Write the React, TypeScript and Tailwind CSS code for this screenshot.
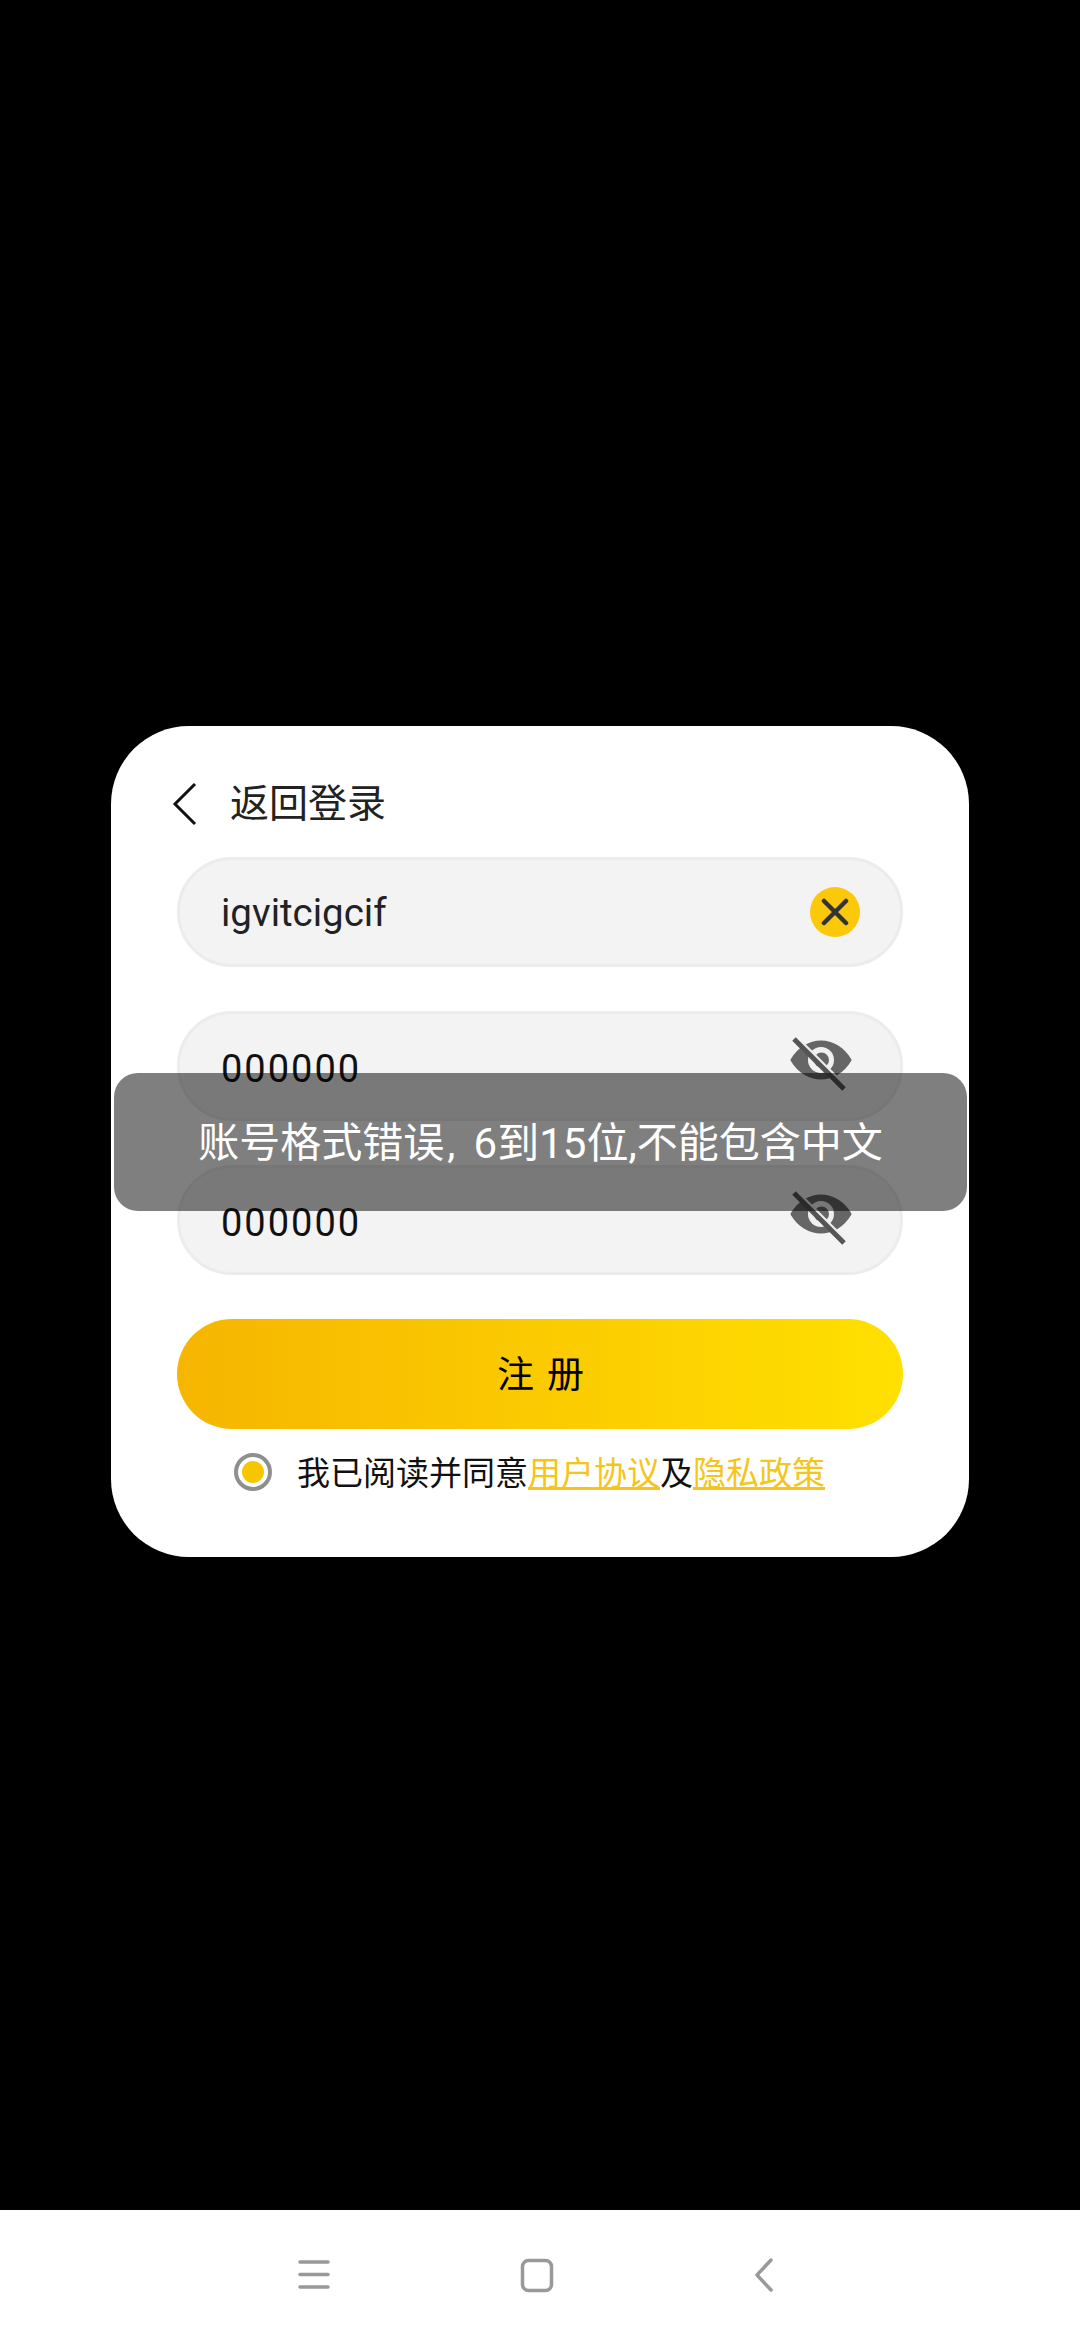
const font = 'font-["Roboto","Noto_Sans_CJK_SC",sans-serif]';

function EyeOff() {
    return (
        <svg width="70" height="60" viewBox="0 0 70 60" className="shrink-0">
            <path d="M7 24 C14 12 25 6 36 6 C47 6 58 12 65 24 C58 36 47 42 36 42 C25 42 14 36 7 24 Z" fill="#666666" stroke="#666666" strokeWidth="3" strokeLinejoin="round" />
            <circle cx="36" cy="24" r="13" fill="#f0f0f0" />
            <circle cx="36.5" cy="24" r="7.5" fill="#666666" />
            <path d="M15 5 L59 49" stroke="#eeeeee" strokeWidth="3.5" />
            <path d="M9 3 L59 53" stroke="#555555" strokeWidth="5" />
        </svg>
    );
}

function Field({ children, icon }: { children: React.ReactNode; icon: React.ReactNode }) {
    return (
        <div className="flex h-[110px] items-center justify-between rounded-full border-[3px] border-[#ececec] bg-[#f3f3f3] pl-[41px] pr-[45px]">
            {children}
            {icon}
        </div>
    );
}

export default function App() {
    return (
        <div className={`flex h-[2340px] w-[1080px] flex-col bg-black ${font}`}>
            <div className="flex h-[2210px] justify-center pt-[726px]">
                <div className="relative h-[831px] w-[858px] rounded-[78px] bg-white px-[66px] pt-[48px]">
                    <div className="mb-[23px] flex h-[60px] items-center">
                        <svg width="26" height="44" viewBox="0 0 26 44" className="-ml-[5px]">
                            <path d="M23 2 L3 22 L23 42" fill="none" stroke="#111111" strokeWidth="3" />
                        </svg>
                        <span className="ml-[32px] text-[39px] text-[#222222]">返回登录</span>
                    </div>

                    <div className="flex flex-col gap-[44px]">
                        <Field
                            icon={
                                <div className="-mr-[5px] flex h-[50px] w-[50px] items-center justify-center rounded-full bg-[#fbc90a]">
                                    <svg width="28" height="28" viewBox="0 0 28 28">
                                        <path d="M3 3 L25 25 M25 3 L3 25" stroke="#333333" strokeWidth="4.5" strokeLinecap="round" />
                                    </svg>
                                </div>
                            }
                        >
                            <span className="mt-[2px] text-[38.5px] text-[#222222]">igvitcigcif</span>
                        </Field>
                        <Field icon={<EyeOff />}>
                            <span className="mt-[6px] text-[38px] tracking-[2px] text-[#111111]">000000</span>
                        </Field>
                        <Field icon={<EyeOff />}>
                            <span className="mt-[6px] text-[38px] tracking-[2px] text-[#111111]">000000</span>
                        </Field>
                        <button className="flex h-[110px] items-center justify-center rounded-full bg-gradient-to-r from-[#f6b500] to-[#ffe000] pl-[3px] pt-[4px] text-[37px] tracking-[2px] text-black">
                            注 册
                        </button>
                    </div>

                    <div className="mt-[23px] ml-[57px] flex items-start">
                        <div className="mt-[1px] flex h-[38px] w-[38px] items-center justify-center rounded-full border-[4px] border-[#8f8f8f]">
                            <div className="h-[22px] w-[22px] rounded-full bg-[#f7c600]" />
                        </div>
                        <p className="ml-[25px] text-[33px] leading-[44px] text-[#111111]">
                            我已阅读并同意<span className="text-[#f5c518] underline">用户协议</span>及<span className="text-[#f5c518] underline">隐私政策</span>
                        </p>
                    </div>

                    <div className="absolute left-[3px] right-[2px] top-[347px] flex h-[138px] items-center justify-center whitespace-pre rounded-[24px] bg-black/50 pt-[3px] text-[41px] text-white">
                        账号格式错误<span className="pl-[3px] tracking-[4px]">, </span><span className="text-[42px]">6到15位,</span>不能包含中文
                    </div>
                </div>
            </div>

            <div className="h-[130px] bg-white">
                <svg width="1080" height="130" viewBox="0 0 1080 130">
                    <path d="M300 52 H328 M300 64.5 H328 M300 77 H328" stroke="#999999" strokeWidth="3.5" strokeLinecap="round" />
                    <rect x="522.5" y="50.5" width="29" height="30" rx="6" fill="none" stroke="#999999" strokeWidth="3.5" />
                    <path d="M771 50 L757 65 L771 80" fill="none" stroke="#999999" strokeWidth="3.5" strokeLinecap="round" strokeLinejoin="round" />
                </svg>
            </div>
        </div>
    );
}
